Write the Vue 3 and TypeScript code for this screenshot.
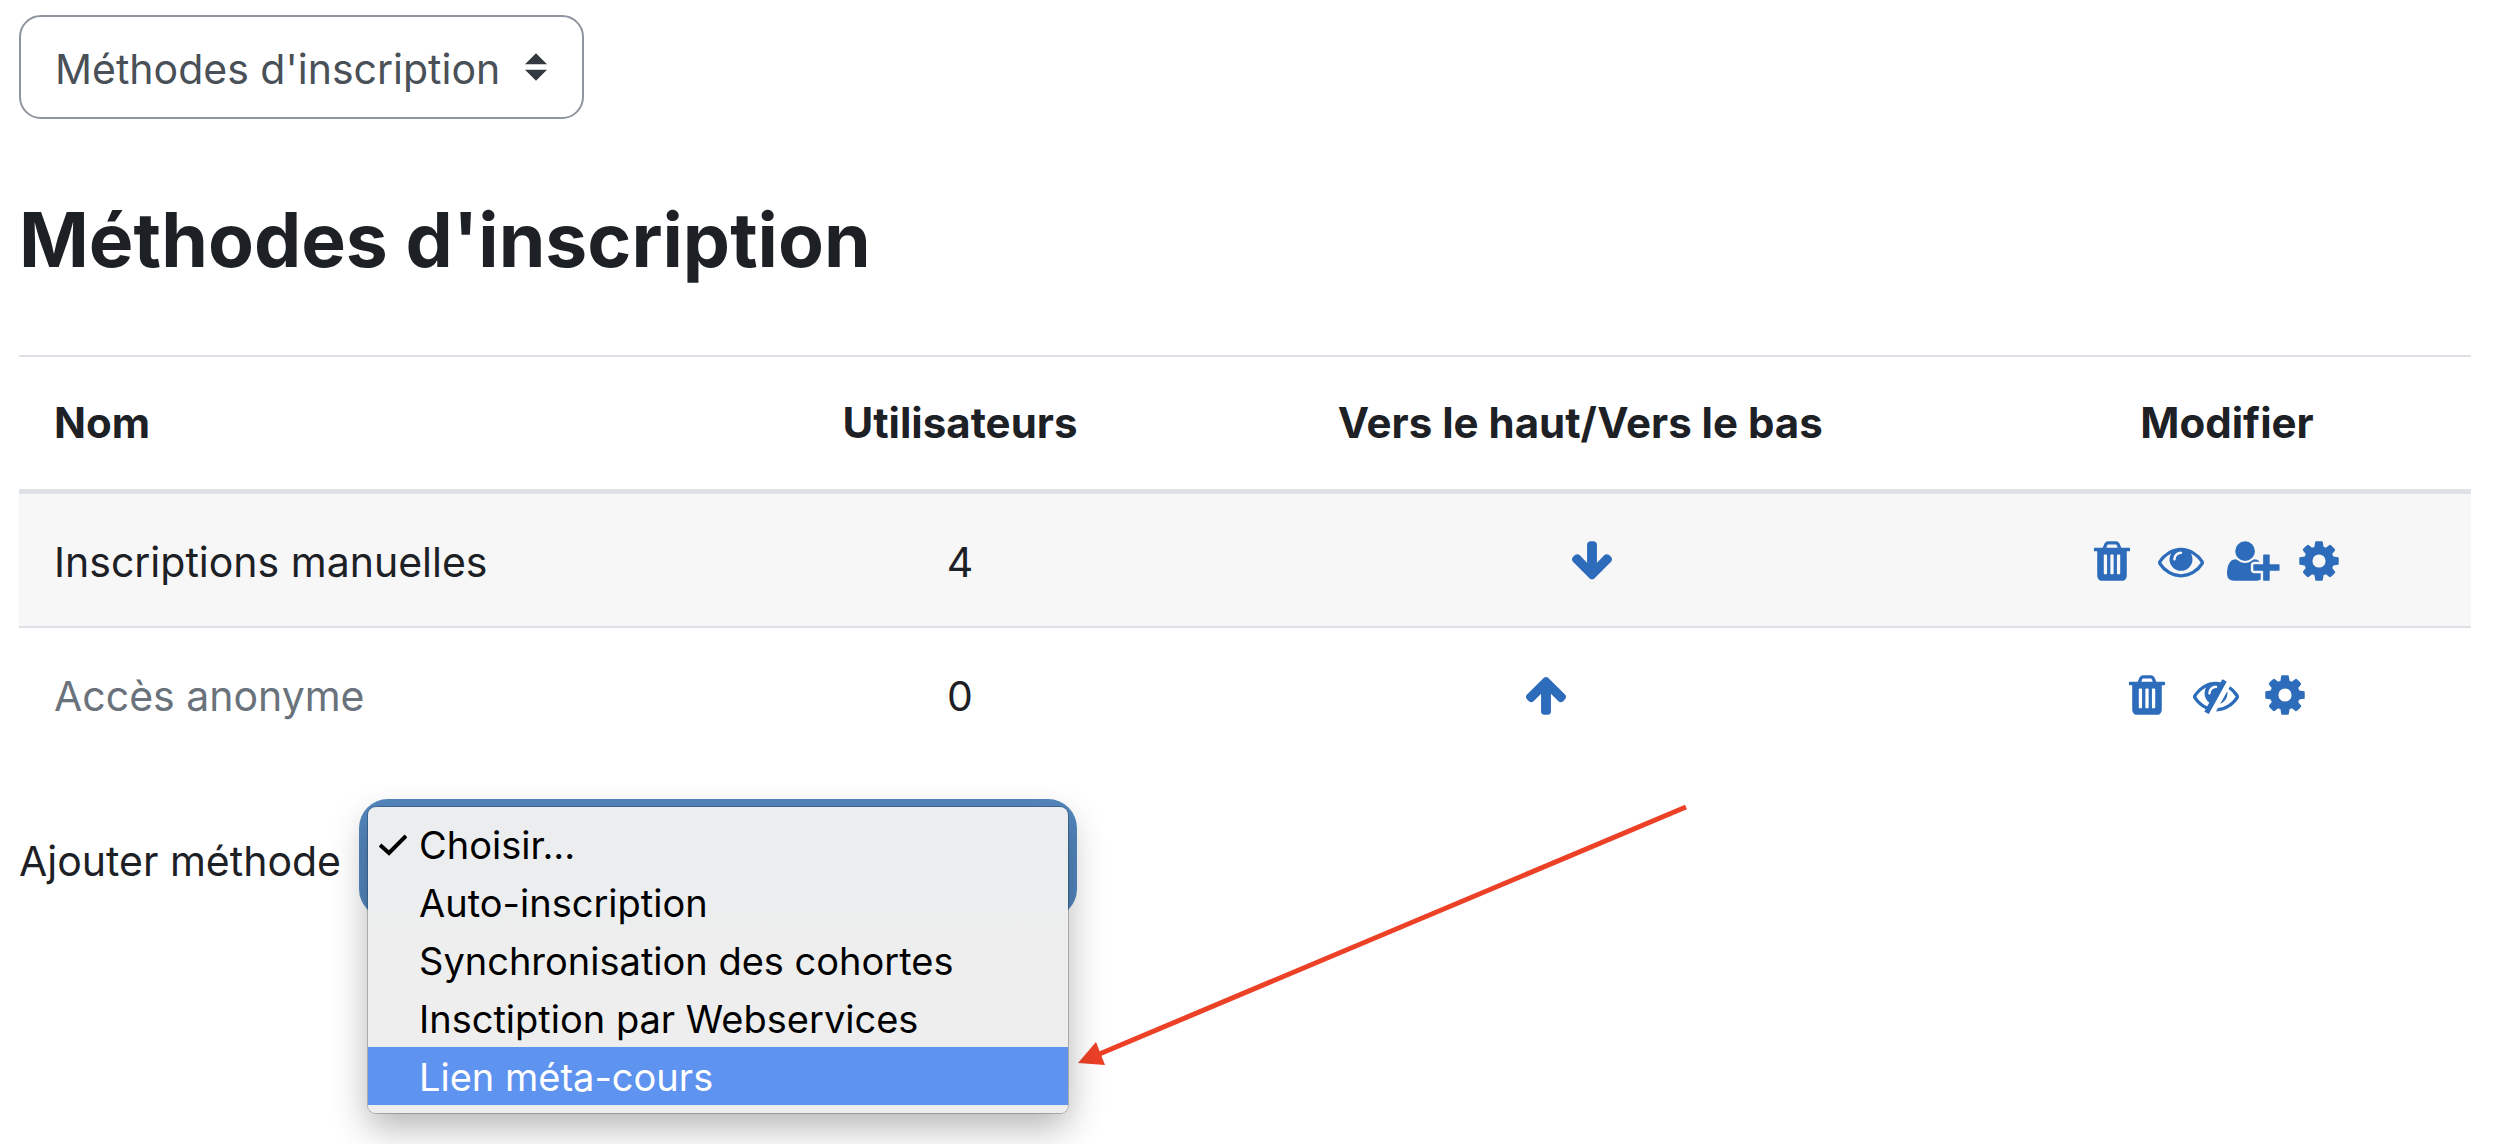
<script setup lang="ts">
import { ref } from 'vue'

type IconName = 'down' | 'up' | 'trash' | 'eye' | 'eyeSlash' | 'userPlus' | 'cog'

interface Action {
  icon: IconName
  label: string
}

interface EnrolMethod {
  name: string
  users: number
  dimmed: boolean
  move: 'up' | 'down'
  actions: Action[]
}

const icons: Record<IconName, { width: number; path: string }> = {
  down: {
    width: 1792,
    path: 'M1675 832q0 53-37 90l-651 652q-39 37-91 37-53 0-90-37l-651-652q-38-36-38-90 0-53 38-91l74-75q39-37 91-37 53 0 90 37l294 294v-704q0-52 38-90t90-38h128q52 0 90 38t38 90v704l294-294q37-37 90-37 52 0 91 37l75 75q37 39 37 91z',
  },
  up: {
    width: 1792,
    path: 'M1675 971q0 51-37 90l-75 75q-38 38-91 38-54 0-90-38l-294-293v704q0 52-37.500 84.500t-90.500 32.500h-128q-53 0-90.500-32.500t-37.500-84.500v-704l-294 293q-36 38-90 38t-90-38l-75-75q-38-38-38-90 0-53 38-91l651-651q35-37 90-37 54 0 91 37l651 651q37 39 37 91z',
  },
  trash: {
    width: 1792,
    path: 'M704 1376v-704q0-14-9-23t-23-9h-64q-14 0-23 9t-9 23v704q0 14 9 23t23 9h64q14 0 23-9t9-23zm256 0v-704q0-14-9-23t-23-9h-64q-14 0-23 9t-9 23v704q0 14 9 23t23 9h64q14 0 23-9t9-23zm256 0v-704q0-14-9-23t-23-9h-64q-14 0-23 9t-9 23v704q0 14 9 23t23 9h64q14 0 23-9t9-23zm-544-992h448l-48-117q-7-9-17-11h-317q-10 2-17 11zm928 32v64q0 14-9 23t-23 9h-96v948q0 83-47 143.500t-113 60.500h-832q-66 0-113-58.500t-47-141.500v-952h-96q-14 0-23-9t-9-23v-64q0-14 9-23t23-9h309l70-167q15-37 54-63t79-26h320q40 0 79 26t54 63l70 167h309q14 0 23 9t9 23z',
  },
  eye: {
    width: 1792,
    path: 'M1664 960q-152-236-381-353 61 104 61 225 0 185-131.500 316.500t-316.500 131.500-316.500-131.500-131.500-316.500q0-121 61-225-229 117-381 353 133 205 333.500 326.500t434.500 121.500 434.500-121.500 333.500-326.500zm-720-384q0-20-14-34t-34-14q-125 0-214.500 89.500t-89.500 214.500q0 20 14 34t34 14 34-14 14-34q0-86 61-147t147-61q20 0 34-14t14-34zm848 384q0 34-20 69-140 230-376.500 368.500t-499.500 138.500-499.500-139-376.500-368q-20-35-20-69t20-69q140-229 376.500-368t499.500-139 499.500 139 376.500 368q20 35 20 69z',
  },
  eyeSlash: {
    width: 1792,
    path: 'M555 1335l78-141q-87-63-136-159t-49-203q0-121 61-225-229 117-381 353 167 258 427 375zm389-759q0-20-14-34t-34-14q-125 0-214.500 89.500t-89.500 214.500q0 20 14 34t34 14 34-14 14-34q0-86 61-147t147-61q20 0 34-14t14-34zm363-191q0 7-1 9-106 189-316 567t-315 566l-49 89q-10 16-28 16-12 0-134-70-16-10-16-28 0-12 44-87-143-65-263.500-173t-208.500-245q-20-31-20-69t20-69q153-235 380-371t496-136q89 0 180 17l54-97q10-16 28-16 5 0 18 6t31 15.500 33 18.500 31.500 18.500 19.500 11.500q16 10 16 27zm37 447q0 139-79 253.500t-209 164.500l280-502q8 45 8 84zm448 128q0 35-20 69-39 64-109 145-150 172-347.500 267t-419.500 95l74-132q212-18 392.500-137t301.500-307q-115-179-282-294l63-112q95 64 182.500 153t144.500 184q20 34 20 69z',
  },
  userPlus: {
    width: 2048,
    path: 'M704 896q-159 0-271.500-112.500t-112.500-271.500 112.500-271.500 271.500-112.500 271.500 112.500 112.500 271.500-112.500 271.500-271.500 112.500zm960 128h352q13 0 22.500 9.500t9.500 22.500v192q0 13-9.500 22.500t-22.500 9.500h-352v352q0 13-9.500 22.500t-22.500 9.500h-192q-13 0-22.500-9.500t-9.500-22.500v-352h-352q-13 0-22.500-9.500t-9.500-22.500v-192q0-13 9.500-22.500t22.500-9.500h352v-352q0-13 9.500-22.500t22.500-9.500h192q13 0 22.500 9.500t9.500 22.500v352zm-736 224q0 52 38 90t90 38h256v238q-68 50-171 50h-874q-121 0-194-69t-73-190q0-53 3.500-103.500t14-109 26.500-108.500 43-97.500 62-81 85.500-53.500 111.500-20q19 0 39 17 79 61 154.500 91.500t164.500 30.500 164.500-30.500 154.500-91.500q20-17 39-17 132 0 217 96h-223q-52 0-90 38t-38 90v192z',
  },
  cog: {
    width: 1792,
    path: 'M1152 896q0-106-75-181t-181-75-181 75-75 181 75 181 181 75 181-75 75-181zm512-109v222q0 12-8 23t-20 13l-185 28q-19 54-39 91 35 50 107 138 10 12 10 25t-9 23q-27 37-99 108t-94 71q-12 0-26-9l-138-108q-44 23-91 38-16 136-29 186-7 28-36 28h-222q-14 0-24.500-8.500t-11.500-21.500l-28-184q-49-16-90-37l-141 107q-10 9-25 9-14 0-25-11-126-114-165-168-7-10-7-23 0-12 8-23 15-21 51-66.500t54-70.500q-27-50-41-99l-183-27q-13-2-21-12.500t-8-23.500v-222q0-12 8-23t19-13l186-28q14-46 39-92-40-57-107-138-10-12-10-24 0-10 9-23 26-36 98.500-107.500t94.500-71.500q13 0 26 10l138 107q44-23 91-38 16-136 29-186 7-28 36-28h222q14 0 24.500 8.500t11.500 21.500l28 184q49 16 90 37l142-107q9-9 24-9 13 0 25 10 129 119 165 170 7 8 7 22 0 12-8 23-15 21-51 66.500t-54 70.500q26 50 41 98l183 28q13 2 21 12.500t8 23.500z',
  },
}

const methods: EnrolMethod[] = [
  {
    name: 'Inscriptions manuelles',
    users: 4,
    dimmed: false,
    move: 'down',
    actions: [
      { icon: 'trash', label: 'Supprimer' },
      { icon: 'eye', label: 'Désactiver' },
      { icon: 'userPlus', label: 'Inscrire des utilisateurs' },
      { icon: 'cog', label: 'Modifier' },
    ],
  },
  {
    name: 'Accès anonyme',
    users: 0,
    dimmed: true,
    move: 'up',
    actions: [
      { icon: 'trash', label: 'Supprimer' },
      { icon: 'eyeSlash', label: 'Activer' },
      { icon: 'cog', label: 'Modifier' },
    ],
  },
]

const options = [
  'Choisir...',
  'Auto-inscription',
  'Synchronisation des cohortes',
  'Insctiption par Webservices',
  'Lien méta-cours',
]

const selected = ref(options[0])
const active = ref('Lien méta-cours')
</script>

<template>
  <main class="page">
    <select class="nav-select" aria-label="Navigation">
      <option>Méthodes d'inscription</option>
    </select>

    <h1>Méthodes d'inscription</h1>

    <table>
      <thead>
        <tr>
          <th class="col-name" scope="col">Nom</th>
          <th class="col-users" scope="col">Utilisateurs</th>
          <th class="col-move" scope="col">Vers le haut/Vers le bas</th>
          <th class="col-edit" scope="col">Modifier</th>
        </tr>
      </thead>
      <tbody>
        <tr v-for="method in methods" :key="method.name">
          <td class="col-name" :class="{ dimmed: method.dimmed }">{{ method.name }}</td>
          <td>{{ method.users }}</td>
          <td>
            <div class="moves">
              <span v-if="method.move === 'down'" class="slot"></span>
              <a class="slot" href="#" :aria-label="method.move === 'down' ? 'Vers le bas' : 'Vers le haut'">
                <svg class="icon" viewBox="0 0 1792 1792"><path :d="icons[method.move].path" /></svg>
              </a>
              <span v-if="method.move === 'up'" class="slot"></span>
            </div>
          </td>
          <td>
            <div class="actions">
              <a v-for="action in method.actions" :key="action.icon" class="slot" href="#" :aria-label="action.label">
                <svg class="icon" :viewBox="`0 0 ${icons[action.icon].width} 1792`">
                  <path :d="icons[action.icon].path" />
                </svg>
              </a>
            </div>
          </td>
        </tr>
      </tbody>
    </table>

    <div class="add-row">
      <label for="add-method">Ajouter méthode</label>
      <div class="picker">
        <select id="add-method" v-model="selected" class="picker-select">
          <option v-for="option in options" :key="option">{{ option }}</option>
        </select>
        <ul class="menu" role="listbox" aria-label="Ajouter méthode">
          <li
            v-for="option in options"
            :key="option"
            role="option"
            :aria-selected="option === selected"
            :class="{ active: option === active }"
            @mouseenter="active = option"
          >
            <span class="tick">
              <svg v-if="option === selected" viewBox="0 0 28 22"><path d="M1 11l9 8L27 2" /></svg>
            </span>
            {{ option }}
          </li>
        </ul>
        <svg class="pointer" viewBox="0 0 612 264" aria-hidden="true">
          <path class="shaft" d="M609 3L20 251" />
          <path class="head" d="M1 259l18-21 9 23z" />
        </svg>
      </div>
    </div>
  </main>
</template>

<style>
body {
  margin: 0;
  background: #fff;
}
</style>

<style scoped>
.page {
  box-sizing: border-box;
  min-height: 100vh;
  padding: 15px 25px 32px 19px;
  color: #1d2125;
  font: 400 41px/60px Inter, "Liberation Sans", sans-serif;
}

.nav-select {
  display: block;
  box-sizing: border-box;
  width: 565px;
  height: 104px;
  padding: 4px 60px 0 34px;
  border: 2px solid #8f959e;
  border-radius: 22px;
  appearance: none;
  color: #495057;
  font: inherit;
  background: #fff url("data:image/svg+xml,%3Csvg xmlns='http://www.w3.org/2000/svg' viewBox='0 0 4 5'%3E%3Cpath fill='%23343a40' d='M2 0L0 2h4zm0 3v2L0 3h4L2 5z'/%3E%3C/svg%3E") no-repeat right 35px center / 22px 28px;
}

h1 {
  margin: 73px 0 67px;
  font-size: 75px;
  line-height: 96px;
  font-weight: 700;
}

table {
  width: 100%;
  border-collapse: separate;
  border-spacing: 0;
  table-layout: fixed;
}

th,
td {
  box-sizing: border-box;
  padding: 38px 35px 34px;
  border-top: 2px solid #dee2e6;
  text-align: center;
  font-weight: 400;
}

th {
  padding: 36px 35px;
  border-bottom: 5px solid #dee2e6;
  font-size: 42px;
  font-weight: 700;
}

th.col-name {
  width: 29.5%;
}

th.col-users {
  width: 17.75%;
}

th.col-move {
  width: 32.85%;
}

th.col-name,
td.col-name {
  text-align: left;
}

tbody tr:first-child td {
  border-top: 0;
  background: #f7f7f7;
}

.dimmed {
  color: #6a737b;
}

.moves,
.actions {
  display: flex;
  align-items: center;
  justify-content: center;
  height: 60px;
  padding-right: 23px;
}

.actions {
  gap: 23px;
}

.slot {
  display: flex;
  flex: none;
  width: 46px;
  height: 48px;
}

.icon {
  flex: none;
  height: 46px;
  fill: #2d6cba;
}

.add-row {
  display: flex;
  align-items: center;
  gap: 26px;
  margin-top: 47px;
}

.add-row label {
  padding-top: 4px;
}

.picker {
  position: relative;
}

.picker-select {
  display: block;
  width: 702px;
  height: 103px;
  border: 0;
  border-radius: 21px;
  appearance: none;
  color: transparent;
  font: inherit;
  background: #5488c0;
  box-shadow: 0 0 0 8px #5488c0;
}

.menu {
  position: absolute;
  z-index: 1;
  top: 0;
  left: 1px;
  width: 700px;
  box-sizing: border-box;
  margin: 0;
  padding: 8px 0;
  border-radius: 8px;
  background: linear-gradient(#ebedef, #eeeeee 60%);
  box-shadow: 0 0 0 1px rgba(0, 0, 0, 0.22), 0 14px 36px rgba(0, 0, 0, 0.3);
  color: #000;
  font-size: 38px;
  list-style: none;
}

.menu li {
  display: flex;
  align-items: center;
  padding-top: 2px;
  line-height: 56px;
  white-space: nowrap;
}

.menu .active {
  background: #5e93f0;
  color: #fff;
}

.tick {
  display: flex;
  flex: none;
  width: 40px;
  padding-left: 11px;
}

.tick svg {
  width: 28px;
  height: 22px;
  fill: none;
  stroke: #000;
  stroke-width: 4;
}

.pointer {
  position: absolute;
  top: -3px;
  left: 710px;
  width: 612px;
  height: 264px;
}

.shaft {
  fill: none;
  stroke: #ec4127;
  stroke-width: 5;
}

.head {
  fill: #ec4127;
}
</style>
